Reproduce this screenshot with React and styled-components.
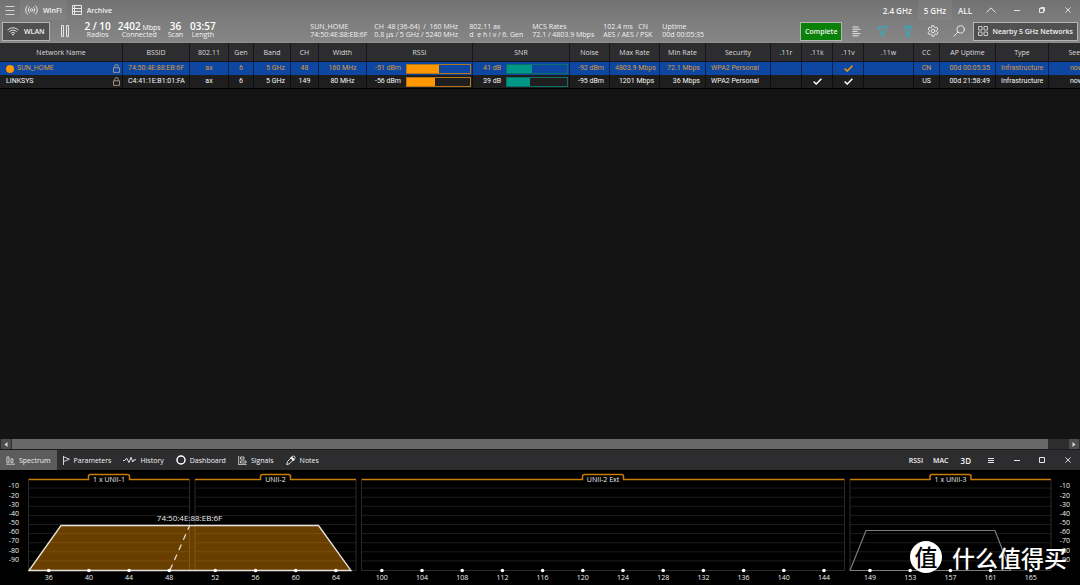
import React from 'react'
import styled, { createGlobalStyle, css } from 'styled-components'

const GlobalStyle = createGlobalStyle`
  * {
    box-sizing: border-box;
  }

  html,
  body,
  #root {
    height: 100%;
    margin: 0;
  }

  body {
    overflow: hidden;
    background: #000;
    color: #f2f2f2;
    font-family: 'Open Sans', 'Noto Sans', sans-serif;
    font-size: 7px;
    line-height: 9px;
  }

  button {
    font: inherit;
    color: inherit;
    border: 0;
    padding: 0;
    margin: 0;
    background: none;
    cursor: pointer;
  }
`

const Window = styled.div`
  display: flex;
  flex-direction: column;
  height: 100%;
`

const Row = styled.div`
  display: flex;
  align-items: stretch;
`

/* top chrome */

const Header = styled.header`
  flex: none;
  background: linear-gradient(#727272, #7b7b7b 40%, #868686);
  border-bottom: 1px solid #8e8e8e;
`

const TitleBar = styled.div`
  display: flex;
  justify-content: space-between;
  height: 20px;
`

const BarButton = styled.button`
  display: flex;
  align-items: center;
  justify-content: center;
  gap: ${props => props.$gap || 5}px;
  padding: 0 ${props => props.$pad || 0}px;
  width: ${props => (props.$width ? `${props.$width}px` : 'auto')};
  font-size: ${props => props.$size || 7}px;
  font-weight: ${props => props.$weight || 600};
  background: ${props => (props.$active ? props.$activeColor || 'rgba(255, 255, 255, 0.05)' : 'none')};
`

const ToolBar = styled.div`
  display: flex;
  justify-content: space-between;
  align-items: center;
  height: 22px;
  padding: 0 2px;
`

const FramedButton = styled.button`
  display: flex;
  align-items: center;
  justify-content: center;
  gap: ${props => props.$gap || 5}px;
  height: 19px;
  padding: 0 4px;
  border: 1px solid #b4b4b4;
  background: ${props => (props.$green ? '#0a820a' : '#505050')};
  font-weight: 600;
`

const Stats = styled.dl`
  display: flex;
  gap: 7px;
  margin: 0 0 0 5px;
`

const Stat = styled.div`
  display: flex;
  flex-direction: column-reverse;
  justify-content: flex-end;
  align-items: center;

  dt {
    line-height: 8px;
  }

  dd {
    margin: 0;
    font-size: 10px;
    font-weight: 600;
    line-height: 9px;
    color: #fff;
  }

  small {
    font-size: 7px;
    font-weight: 400;
    line-height: 7px;
  }
`

const Details = styled.div`
  display: grid;
  grid-template-columns: 64px 95px 63px 71px 59px 43px;
  line-height: 8px;
  white-space: pre;
`

/* network table */

const TableArea = styled.div`
  flex: 1;
  min-height: 0;
  overflow: hidden;
  background: #141414;
`

const Table = styled.table`
  width: 100%;
  min-width: 1105px;
  table-layout: fixed;
  border-collapse: separate;
  border-spacing: 0;
  border-bottom: 1px solid #000;
`

const HeadCell = styled.th`
  height: 19px;
  padding: 0;
  background: #2d2d30;
  border-right: 1px solid #161616;
  border-bottom: 1px solid #161616;
  color: #dedede;
  font-weight: 500;
`

const BodyRow = styled.tr`
  background: ${props => (props.$selected ? '#0d47a1' : '#1e1e1e')};
  color: ${props => (props.$selected ? '#dc9838' : '#f6f6f6')};
  font-family: Roboto, 'Open Sans', sans-serif;
`

const Cell = styled.td`
  height: 13px;
  padding: 0 5px;
  overflow: hidden;
  white-space: nowrap;
  text-align: ${props => props.$align || 'center'};
  border-right: 1px solid rgba(0, 0, 0, 0.5);

  svg {
    display: block;
    margin: 0 auto;
  }
`

const NameCell = styled.div`
  display: flex;
  align-items: center;
  gap: 3px;
  padding-left: 1px;

  svg {
    margin: 0 -3px 0 auto;
  }
`

const Dot = styled.span`
  width: 8px;
  height: 8px;
  border-radius: 50%;
  background: #ff9800;
`

const Meter = styled.div`
  display: flex;
  align-items: center;
  justify-content: flex-end;
  gap: 5px;
  margin-right: -4px;
`

const MeterTrack = styled.div`
  width: ${props => props.$width}px;
  height: 10px;
  border: 1px solid ${props => props.$edge};
`

const MeterFill = styled.div`
  height: 100%;
  background: ${props => props.$color};
`

/* scroll bar */

const ScrollBar = styled.div`
  flex: none;
  display: flex;
  height: 11px;
  padding: 0 1px;
  background: #2d2d30;
  border-bottom: 1px solid #1c1c1c;
`

const ScrollButton = styled.button`
  display: flex;
  align-items: center;
  justify-content: center;
  width: 10px;
  background: #4e4e4e;
`

const ScrollTrack = styled.div`
  flex: 1;
  padding-left: 1px;
`

const ScrollThumb = styled.div`
  width: 98%;
  height: 100%;
  background: #686868;
`

/* lower pane */

const PaneBar = styled.nav`
  flex: none;
  display: flex;
  justify-content: space-between;
  height: 20px;
  background: #2d2d30;
`

const ChartArea = styled.section`
  flex: none;
  position: relative;
  background: #000;
`

const Chart = styled.svg`
  display: block;
  width: 100%;
  font-family: inherit;
  font-size: 7px;
  font-weight: 500;

  text {
    fill: #efefef;
    text-anchor: middle;
  }
`

const Watermark = styled.div`
  position: absolute;
  right: 13px;
  bottom: 12px;
  display: flex;
  align-items: center;
  gap: 10px;
  color: #fff;
  font: 500 23px/32px 'Noto Sans CJK SC', sans-serif;
`

const Seal = styled.span`
  width: 32px;
  height: 32px;
  border-radius: 50%;
  background: #fff;
  color: #000;
  font-size: 23px;
  line-height: 31px;
  text-align: center;
`

const Svg = styled.svg`
  flex: none;
  fill: none;
  stroke: ${props => props.$color || '#e6e6e6'};
  stroke-width: ${props => props.$stroke || 1};
  ${props => props.$round && css`
    stroke-linecap: round;
    stroke-linejoin: round;
  `}
`

const Icon = ({ w = 10, h = 10, color, stroke, round, children }) => (
  <Svg width={w} height={h} viewBox={`0 0 ${w} ${h}`} $color={color} $stroke={stroke} $round={round} aria-hidden="true">
    {children}
  </Svg>
)

const MenuIcon = () => <Icon color="#d2d2d2"><path d="M0.5 1.5h9M0.5 5.5h9M0.5 9.5h9" /></Icon>
const RadioIcon = () => (
  <Icon w={13} h={10} round>
    <circle cx="6.5" cy="5" r="1.3" />
    <path d="M4.3 2.4a3.6 3.6 0 0 0 0 5.2M8.7 2.4a3.6 3.6 0 0 1 0 5.2M2.3 0.9a5.6 5.6 0 0 0 0 8.2M10.7 0.9a5.6 5.6 0 0 1 0 8.2" />
  </Icon>
)
const ArchiveIcon = () => (
  <Icon><path d="M0.5 0.5h9v9h-9zM0.5 3.5h9M0.5 6.5h9M2.5 0.5v9" /></Icon>
)
const WifiIcon = () => (
  <Icon w={12} h={10} round stroke={0.9}>
    <path d="M0.8 3.8a7.4 7.4 0 0 1 10.4 0M2.5 5.5a5 5 0 0 1 7 0M4.2 7.1a2.6 2.6 0 0 1 3.6 0" />
    <circle cx="6" cy="8.7" r="0.5" />
  </Icon>
)
const PauseIcon = () => <Icon w={8} h={12}><path d="M0.5 0.5h2v11h-2zM5.5 0.5h2v11h-2z" /></Icon>
const ListIcon = () => <Icon w={9} h={11}><path d="M0.5 1h6M0.5 3.2h8M0.5 5.4h5M0.5 7.6h8M0.5 9.8h6" /></Icon>
const FilterIcon = () => (
  <Icon w={11} h={11} color="#22b4cc"><path d="M0.7 0.8h9.6L6.6 5.2v4.9l-2.2-1.5V5.2z" /></Icon>
)
const WrenchIcon = () => (
  <Icon w={8} h={12} color="#22b4cc">
    <path d="M0.9 0.6v3.6l1.9 1.8v5.4h2.4V6l1.9-1.8V0.6M2.8 0.4v2.8h2.4V0.4" />
  </Icon>
)
const GearIcon = () => (
  <Icon w={12} h={12} round>
    <path d="M5 0.8h2l0.4 1.5 1 0.5 1.5-0.5 1 1.8-1.1 1.1v1.4l1.1 1.1-1 1.8-1.5-0.5-1 0.5L7 11.2H5l-0.4-1.7-1-0.5-1.5 0.5-1-1.8 1.1-1.1V5.2L1.1 4.1l1-1.8 1.5 0.5 1-0.5z" />
    <circle cx="6" cy="6" r="1.8" />
  </Icon>
)
const SearchIcon = () => <Icon w={12} h={12} round><circle cx="7.6" cy="4.4" r="3.7" /><path d="M4.9 7.1L0.8 11.2" /></Icon>
const GridIcon = () => (
  <Icon color="#c8c8c8"><path d="M0.5 0.5h3.5v3.5h-3.5zM6 0.5h3.5v3.5h-3.5zM0.5 6h3.5v3.5h-3.5zM6 6h3.5v3.5h-3.5z" /></Icon>
)
const ChevronIcon = () => <Icon w={10} h={6}><path d="M0.4 5.4L5 0.9l4.6 4.5" /></Icon>
const MinimizeIcon = () => <Icon w={6} h={6}><path d="M0 3.5h6" /></Icon>
const RestoreIcon = () => <Icon w={6} h={6}><path d="M0.5 1.5h4v4h-4zM1.5 0.5h4v4" /></Icon>
const MaximizeIcon = () => <Icon w={6} h={6}><path d="M0.5 0.5h5v5h-5z" /></Icon>
const CloseIcon = () => <Icon w={6} h={6} stroke={0.9}><path d="M0.4 0.4l5.2 5.2M5.6 0.4L0.4 5.6" /></Icon>
const LinesIcon = () => <Icon w={6} h={5}><path d="M0 0.5h6M0 2.5h6M0 4.5h6" /></Icon>
const LockIcon = () => (
  <Icon w={7} h={9} color="#a89c8c" stroke={0.9}><path d="M0.5 3.8h6v4.6h-6zM1.8 3.8V2.2a1.7 1.7 0 0 1 3.4 0v1.6" /></Icon>
)
const CheckIcon = ({ color }) => <Icon w={9} h={7} color={color} stroke={1.4}><path d="M0.6 3.6L3.2 6.1L8.4 0.7" /></Icon>

const SpectrumIcon = () => <Icon w={9} h={9} stroke={0.8}><path d="M0.9 0.9h2v5.5h-2zM4.9 2.9h2v3.5h-2zM0 8.2h9" /></Icon>
const FlagIcon = () => <Icon w={7} h={9} stroke={0.9}><path d="M0.5 0v9M0.5 0.8L6.4 3.2L0.5 5.6" /></Icon>
const HistoryIcon = () => (
  <Icon w={13} h={8} round><path d="M0.5 4.5h1.3L3.6 2.2L6 6.5L8 1.3L9.8 6L11 3.8h1.6" /></Icon>
)
const RingIcon = () => <Icon color="#fff" stroke={1.5}><circle cx="5" cy="5" r="4" /></Icon>
const SignalsIcon = () => <Icon w={9} h={9} stroke={0.8}><path d="M0.7 0v9M2.5 1h3.5v2.2h-3.5zM2.5 5h5.5v2h-5.5zM0.7 8.6h8" /></Icon>
const PencilIcon = () => (
  <Icon w={10} h={10} round>
    <path d="M0.8 9.2L1.6 6.4L6.6 1.4a1.5 1.5 0 0 1 2.1 2.1L3.7 8.5z" />
    <path d="M5.4 2.6l2.1 2.1" stroke="#fff" strokeWidth="2" />
  </Icon>
)

const columns = [
  ['Network Name', 123], ['BSSID', 67], ['802.11', 39], ['Gen', 25], ['Band', 37],
  ['CH', 28], ['Width', 48], ['RSSI', 106], ['SNR', 97], ['Noise', 40],
  ['Max Rate', 50], ['Min Rate', 46], ['Security', 65], ['.11r', 31], ['.11k', 31],
  ['.11v', 31], ['.11w', 50], ['CC', 26], ['AP Uptime', 56], ['Type', 53], ['Seen', 56],
]

const networks = [
  {
    name: 'SUN_HOME', selected: true, bssid: '74:50:4E:88:EB:6F', channel: 48, width: '160 MHz',
    rssi: -51, rssiFill: 50, snr: 41, snrFill: 41, noise: -92, max: '4803.9 Mbps', min: '72.1 Mbps',
    k: false, v: true, country: 'CN', uptime: '00d 00:05:35',
  },
  {
    name: 'LINKSYS', bssid: 'C4:41:1E:B1:01:FA', channel: 149, width: '80 MHz',
    rssi: -56, rssiFill: 44, snr: 39, snrFill: 39, noise: -95, max: '1201 Mbps', min: '36 Mbps',
    k: true, v: true, country: 'US', uptime: '00d 21:58:49',
  },
]

const stats = [
  ['Radios', '2 / 10'],
  ['Connected', '2402', 'Mbps'],
  ['Scan', '36'],
  ['Length', '03:57'],
]

const details = [
  ['SUN_HOME', '74:50:4E:88:EB:6F'],
  ['CH  48 (36-64)  /  160 MHz', '0.8 µs / 5 GHz / 5240 MHz'],
  ['802.11 ax', 'd  e h i v / 6. Gen'],
  ['MCS Rates', '72.1 / 4803.9 Mbps'],
  ['102.4 ms   CN', 'AES / AES / PSK'],
  ['Uptime', '00d 00:05:35'],
]

const tabs = [
  ['Spectrum', SpectrumIcon],
  ['Parameters', FlagIcon],
  ['History', HistoryIcon],
  ['Dashboard', RingIcon],
  ['Signals', SignalsIcon],
  ['Notes', PencilIcon],
]

const bands = [
  { label: '1 x UNII-1', from: 28.5, to: 189.5, tab: 41, first: 36, count: 4, x: 48.7 },
  { label: 'UNII-2', from: 195, to: 356, tab: 30, first: 52, count: 4, x: 215.3 },
  { label: 'UNII-2 Ext', from: 361.5, to: 844.5, tab: 41, first: 100, count: 12, x: 381.8 },
  { label: '1 x UNII-3', from: 850, to: 1051, tab: 41, first: 149, count: 5, x: 870 },
]

const levels = [1, 2, 3, 4, 5, 6, 7, 8, 9]

const WindowButtons = ({ maximized }) => (
  <Row>
    <BarButton $width={25} aria-label="Minimize"><MinimizeIcon /></BarButton>
    <BarButton $width={26} aria-label="Maximize">{maximized ? <RestoreIcon /> : <MaximizeIcon />}</BarButton>
    <BarButton $width={25} aria-label="Close"><CloseIcon /></BarButton>
  </Row>
)

const LevelMeter = ({ text, fill, width, color, edge }) => (
  <Meter>
    {text}
    <MeterTrack $width={width} $edge={edge}>
      <MeterFill $color={color} style={{ width: `${fill}%` }} />
    </MeterTrack>
  </Meter>
)

const NetworkRow = ({ network }) => {
  const check = <CheckIcon color={network.selected ? '#ff9800' : '#fff'} />
  return (
    <BodyRow $selected={network.selected}>
      <Cell $align="left">
        <NameCell>
          {network.selected && <Dot />}
          {network.name}
          <LockIcon />
        </NameCell>
      </Cell>
      <Cell $align="left">{network.bssid}</Cell>
      <Cell>ax</Cell>
      <Cell>6</Cell>
      <Cell $align="right">5 GHz</Cell>
      <Cell>{network.channel}</Cell>
      <Cell>{network.width}</Cell>
      <Cell>
        <LevelMeter text={`${network.rssi} dBm`} fill={network.rssiFill} width={65} color="#ff9800" edge="#b5751a" />
      </Cell>
      <Cell>
        <LevelMeter text={`${network.snr} dB`} fill={network.snrFill} width={62} color="#009688" edge="#0a7068" />
      </Cell>
      <Cell $align="right">{network.noise} dBm</Cell>
      <Cell $align="right">{network.max}</Cell>
      <Cell $align="right">{network.min}</Cell>
      <Cell $align="left">WPA2 Personal</Cell>
      <Cell />
      <Cell>{network.k && check}</Cell>
      <Cell>{network.v && check}</Cell>
      <Cell />
      <Cell>{network.country}</Cell>
      <Cell $align="right">{network.uptime}</Cell>
      <Cell>Infrastructure</Cell>
      <Cell>now</Cell>
    </BodyRow>
  )
}

const Band = ({ band }) => {
  const middle = (band.from + band.to) / 2
  const left = middle - band.tab / 2
  const right = middle + band.tab / 2
  return (
    <g>
      <path
        d={levels.map(n => `M${band.from} ${9 + n * 9.1}H${band.to}`).join('')}
        stroke="#1c1c1c"
      />
      <path d={`M${band.from} 10V100.5H${band.to}V10`} fill="none" stroke="#2a2a2a" />
      <path
        d={`M${band.from} 9.5H${left}V6.5q0 -2 2 -2H${right - 2}q2 0 2 2V9.5H${band.to}`}
        fill="none"
        stroke="#c67c08"
        strokeWidth="1.5"
      />
      <text x={middle} y="12">{band.label}</text>
    </g>
  )
}

const Channels = ({ band }) => (
  <g>
    {Array.from({ length: band.count }, (_, i) => (
      <g key={i}>
        <circle cx={band.x + i * 40.2} cy="100.5" r="1.8" fill="#fff" />
        <text x={band.x + i * 40.2} y="110">{band.first + i * 4}</text>
      </g>
    ))}
  </g>
)

const SpectrumChart = () => (
  <Chart viewBox="0 0 1080 115" role="img" aria-label="Spectrum">
    {bands.map(band => <Band key={band.label} band={band} />)}
    {levels.map(n => (
      <g key={n}>
        <text x="14" y={9.2 + n * 9.17}>{`-${n}0`}</text>
        <text x="1065" y={9.2 + n * 9.17}>{`-${n}0`}</text>
      </g>
    ))}
    <path d="M29 100.5L61 55.5H318.5L351 100.5Z" fill="#ff9800" fillOpacity="0.41" stroke="#e8e2da" strokeWidth="1.3" />
    <path d="M170 100L189.5 56" stroke="#e0d8cc" strokeWidth="1.3" strokeDasharray="6 5" />
    <path d="M850 100.5L866 60.5H995L1010.5 100.5Z" fill="none" stroke="#7c7c7c" strokeWidth="1.2" />
    <text x="189.5" y="51" fontSize="8">74:50:4E:88:EB:6F</text>
    {bands.map(band => <Channels key={band.label} band={band} />)}
  </Chart>
)

class App extends React.Component {
  constructor(props) {
    super(props)

    this.state = {
      tab: 'Spectrum',
    }
  }

  render() {
    const { tab } = this.state
    return (
      <Window>
        <GlobalStyle />
        <Header>
          <TitleBar>
            <Row>
              <BarButton $width={20} aria-label="Menu"><MenuIcon /></BarButton>
              <BarButton $pad={5} $active><RadioIcon />WinFi</BarButton>
              <BarButton $pad={5}><ArchiveIcon />Archive</BarButton>
            </Row>
            <Row>
              <BarButton $pad={6} $size={8}>2.4 GHz</BarButton>
              <BarButton $pad={6} $size={8} $active>5 GHz</BarButton>
              <BarButton $pad={6} $size={8}>ALL</BarButton>
              <BarButton $width={26} aria-label="Collapse"><ChevronIcon /></BarButton>
              <WindowButtons maximized />
            </Row>
          </TitleBar>
          <ToolBar>
            <Row>
              <FramedButton><WifiIcon />WLAN</FramedButton>
              <BarButton $width={30} aria-label="Pause"><PauseIcon /></BarButton>
              <Stats>
                {stats.map(([label, value, unit]) => (
                  <Stat key={label}>
                    <dt>{label}</dt>
                    <dd>{value}{unit && <small> {unit}</small>}</dd>
                  </Stat>
                ))}
              </Stats>
            </Row>
            <Details>
              {details.map(([top, bottom]) => (
                <div key={top}>
                  <div>{top}</div>
                  <div>{bottom}</div>
                </div>
              ))}
            </Details>
            <Row>
              <FramedButton $green>Complete</FramedButton>
              <BarButton $width={28} aria-label="Details"><ListIcon /></BarButton>
              <BarButton $width={25} aria-label="Filter"><FilterIcon /></BarButton>
              <BarButton $width={25} aria-label="Tools"><WrenchIcon /></BarButton>
              <BarButton $width={25} aria-label="Settings"><GearIcon /></BarButton>
              <BarButton $width={28} aria-label="Search"><SearchIcon /></BarButton>
              <FramedButton $gap={4}><GridIcon />Nearby 5 GHz Networks</FramedButton>
            </Row>
          </ToolBar>
        </Header>
        <TableArea>
          <Table>
            <colgroup>
              {columns.map(([label, width]) => <col key={label} width={width} />)}
            </colgroup>
            <thead>
              <tr>
                {columns.map(([label]) => <HeadCell key={label} scope="col">{label}</HeadCell>)}
              </tr>
            </thead>
            <tbody>
              {networks.map(network => <NetworkRow key={network.bssid} network={network} />)}
            </tbody>
          </Table>
        </TableArea>
        <ScrollBar>
          <ScrollButton aria-label="Scroll left">
            <Icon w={4} h={5}><path d="M3.5 0L0.5 2.5L3.5 5z" fill="#ddd" stroke="none" /></Icon>
          </ScrollButton>
          <ScrollTrack><ScrollThumb /></ScrollTrack>
          <ScrollButton aria-label="Scroll right">
            <Icon w={4} h={5}><path d="M0.5 0L3.5 2.5L0.5 5z" fill="#ddd" stroke="none" /></Icon>
          </ScrollButton>
        </ScrollBar>
        <PaneBar>
          <Row>
            {tabs.map(([label, TabIcon]) => (
              <BarButton
                key={label}
                $pad={6}
                $gap={4}
                $weight={500}
                $active={tab === label}
                $activeColor="#5c5c5c"
                onClick={() => this.setState({ tab: label })}
              >
                <TabIcon />
                {label}
              </BarButton>
            ))}
          </Row>
          <Row>
            <BarButton $pad={5}>RSSI</BarButton>
            <BarButton $pad={5}>MAC</BarButton>
            <BarButton $pad={7} $size={8}>3D</BarButton>
            <BarButton $width={26} aria-label="Options"><LinesIcon /></BarButton>
            <WindowButtons />
          </Row>
        </PaneBar>
        <ChartArea>
          <SpectrumChart />
          <Watermark><Seal>值</Seal>什么值得买</Watermark>
        </ChartArea>
      </Window>
    )
  }
}

export default App
